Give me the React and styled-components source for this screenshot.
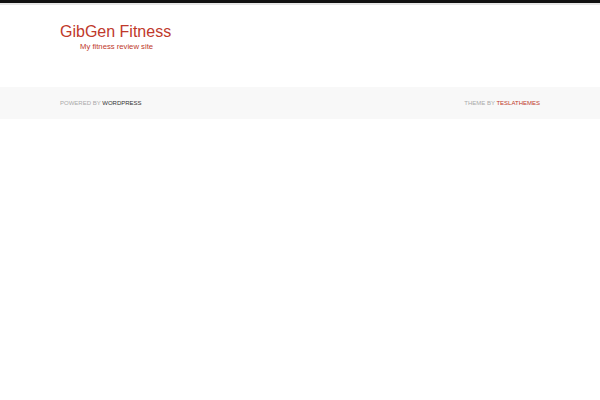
import React from "react";
import styled, { createGlobalStyle } from "styled-components";

const Global = createGlobalStyle`
  html, body { margin: 0; padding: 0; background: #fff; }
  body { font-family: "Liberation Sans", Arial, sans-serif; }
`;

const TopBar = styled.div`
  height: 3px;
  background: #111;
  border-bottom: 2px solid #e6e6e6;
`;

const Container = styled.div`
  width: 480px;
  margin: 0 auto;
`;

const Header = styled.header`
  padding: 19px 0 0;
  height: 82px;
  box-sizing: border-box;
`;

const SiteTitle = styled.a`
  display: block;
  font-size: 16px;
  line-height: 16px;
  color: #c0392b;
  text-decoration: none;
`;

const Tagline = styled.div`
  margin: 2px 0 0 20px;
  font-size: 7.7px;
  line-height: 10px;
  color: #c0392b;
`;

const Footer = styled.footer`
  background: #f8f8f8;
  height: 32px;
`;

const FooterRow = styled(Container)`
  display: flex;
  justify-content: space-between;
  align-items: center;
  height: 100%;
  font-size: 6px;
  text-transform: uppercase;
  color: #aaa;
`;

const FLink = styled.span`
  color: ${(p) => p.$color};
`;

export default function App() {
  return (
    <>
      <Global />
      <TopBar />
      <Container>
        <Header>
          <SiteTitle href="#">GibGen Fitness</SiteTitle>
          <Tagline>My fitness review site</Tagline>
        </Header>
      </Container>
      <Footer>
        <FooterRow>
          <span>
            Powered by <FLink $color="#333">WordPress</FLink>
          </span>
          <span>
            Theme by <FLink $color="#c0392b">TeslaThemes</FLink>
          </span>
        </FooterRow>
      </Footer>
    </>
  );
}
